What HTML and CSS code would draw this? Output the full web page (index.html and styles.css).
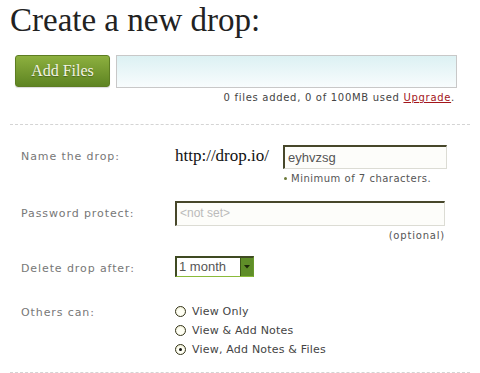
FILE: index.html
```html
<!DOCTYPE html>
<html>
<head>
<meta charset="utf-8">
<link rel="stylesheet" href="styles.css">
</head>
<body>
<div class="page">
  <h1 class="title">Create a new drop:</h1>
  <div class="upload">
    <button class="add-btn">Add Files</button>
    <div class="dropzone"></div>
  </div>
  <p class="status">0 files added, 0 of 100MB used <a class="upgrade" href="#">Upgrade</a>.</p>
  <div class="sep"></div>

  <div class="field row-name">
    <div class="lbl lbl-24">Name the drop:</div>
    <div class="ctl">
      <div class="url-line">
        <span class="prefix">http://drop.io/</span>
        <div class="url-col">
          <div class="text-input name-input">eyhvzsg</div>
          <div class="hint"><span class="bullet"></span>Minimum of 7 characters.</div>
        </div>
      </div>
    </div>
  </div>

  <div class="field row-pass">
    <div class="lbl lbl-25">Password protect:</div>
    <div class="ctl pass-col">
      <div class="text-input pass-input"><span class="placeholder">&lt;not set&gt;</span></div>
      <div class="optional">(optional)</div>
    </div>
  </div>

  <div class="field row-delete">
    <div class="lbl lbl-delete">Delete drop after:</div>
    <div class="ctl">
      <div class="select"><span class="select-val">1 month</span><span class="select-arrow"><svg width="6" height="4" viewBox="0 0 6 4"><path d="M0 0h6L3 3.5z" fill="#1e2a0a"/></svg></span></div>
    </div>
  </div>

  <div class="field row-others">
    <div class="lbl lbl-radio">Others can:</div>
    <div class="ctl radios">
      <div class="radio-row"><span class="radio"></span>View Only</div>
      <div class="radio-row"><span class="radio"></span>View &amp; Add Notes</div>
      <div class="radio-row"><span class="radio checked"></span>View, Add Notes &amp; Files</div>
    </div>
  </div>
  <div class="sep sep-bottom"></div>
</div>
</body>
</html>
```

FILE: styles.css
```css
html, body {
  margin: 0;
  padding: 0;
  background: #fff;
}
.page {
  padding: 0 10px;
  width: 460px;
  font-family: "DejaVu Sans", Verdana, sans-serif;
}
.title {
  margin: 0;
  height: 40px;
  font-family: "Liberation Serif", Georgia, serif;
  font-weight: normal;
  font-size: 33px;
  line-height: 40px;
  color: #222;
}
.upload {
  display: flex;
  margin-top: 15px;
  padding-left: 5px;
  height: 33px;
}
.add-btn {
  width: 95px;
  height: 32px;
  border: 1px solid #5d7d22;
  border-radius: 3px;
  background: linear-gradient(#8db03f, #5e8422);
  color: #f4f4e4;
  font-family: "Liberation Serif", Georgia, serif;
  font-size: 16px;
  padding: 0;
  box-shadow: 0 1px 1px rgba(0,0,0,0.15);
  text-shadow: 0 1px 1px rgba(0,0,0,0.3);
}
.dropzone {
  margin-left: 6px;
  width: 339px;
  height: 31px;
  border: 1px solid #c8c8c8;
  background: linear-gradient(#dcf1f3, #f8fcfd);
}
.status {
  margin: 3px 0 0;
  padding-right: 15px;
  text-align: right;
  font-size: 10px;
  line-height: 14px;
  color: #444;
  letter-spacing: 0.7px;
}
.upgrade {
  color: #a3151a;
  text-decoration: underline;
}
.sep {
  margin-top: 19px;
  border-top: 1px dashed #d4d4d4;
  height: 0;
}
.field {
  display: flex;
  padding-left: 11px;
}
.lbl {
  width: 154px;
  flex: none;
  font-size: 11px;
  color: #777;
  letter-spacing: 0.9px;
}
.lbl-24 { line-height: 24px; }
.lbl-25 { line-height: 25px; }
.lbl-delete { line-height: 20px; padding-top: 3px; }
.lbl-radio { line-height: 19px; padding-top: 1px; }
.row-name { margin-top: 20px; }
.row-pass { margin-top: 15px; }
.row-delete { margin-top: 13px; }
.row-others { margin-top: 23px; }
.url-line {
  display: flex;
}
.prefix {
  font-family: "Liberation Serif", Georgia, serif;
  font-size: 17px;
  color: #111;
  line-height: 21px;
  width: 108px;
}
.text-input {
  box-sizing: border-box;
  border-top: 2px solid #47472a;
  border-left: 2px solid #47472a;
  border-right: 1px solid #dcdcd4;
  border-bottom: 1px solid #dcdcd4;
  background: #fdfdfa;
  font-family: "Liberation Sans", Arial, sans-serif;
  padding-left: 3px;
}
.name-input {
  width: 164px;
  height: 24px;
  font-size: 13px;
  line-height: 21px;
  color: #555;
}
.hint {
  margin-top: 3px;
  font-size: 10px;
  line-height: 14px;
  color: #555;
  letter-spacing: 0.5px;
}
.bullet {
  display: inline-block;
  width: 3px;
  height: 3px;
  border-radius: 50%;
  background: #6c7a3a;
  margin: 0 4px 1px 1px;
  vertical-align: middle;
}
.pass-col {
  width: 270px;
}
.pass-input {
  width: 270px;
  height: 25px;
  font-size: 12px;
  line-height: 21px;
}
.placeholder {
  color: #bbb;
}
.optional {
  margin-top: 3px;
  text-align: right;
  font-size: 10px;
  line-height: 14px;
  color: #555;
  letter-spacing: 0.8px;
}
.select {
  display: flex;
  box-sizing: border-box;
  width: 79px;
  height: 21px;
  border-top: 2px solid #3f4a22;
  border-left: 2px solid #3f4a22;
  border-bottom: 1px solid #8bbb3a;
  border-right: 1px solid #6a9a2c;
  background: #fff;
}
.select-val {
  flex: 1;
  font-family: "Liberation Sans", Arial, sans-serif;
  font-size: 13px;
  line-height: 18px;
  color: #555;
  padding-left: 2px;
}
.select-arrow {
  width: 12px;
  background: #5f8e28;
  border-left: 1px solid #3f5a1a;
  display: flex;
  align-items: center;
  justify-content: center;
}
.radios {
  display: flex;
  flex-direction: column;
}
.radio-row {
  display: flex;
  align-items: center;
  height: 19px;
  font-size: 11px;
  color: #444;
  letter-spacing: 0.2px;
}
.radio {
  box-sizing: border-box;
  width: 11px;
  height: 11px;
  border-radius: 50%;
  border: 1.5px solid #333318;
  background: radial-gradient(circle at 50% 60%, #fffff4 40%, #e6e6c8 100%);
  margin-right: 6px;
  position: relative;
}
.radio.checked::after {
  content: "";
  position: absolute;
  left: 2.5px;
  top: 2.5px;
  width: 3px;
  height: 3px;
  border-radius: 50%;
  background: #111;
}
.sep-bottom {
  margin-top: 13px;
}
```
